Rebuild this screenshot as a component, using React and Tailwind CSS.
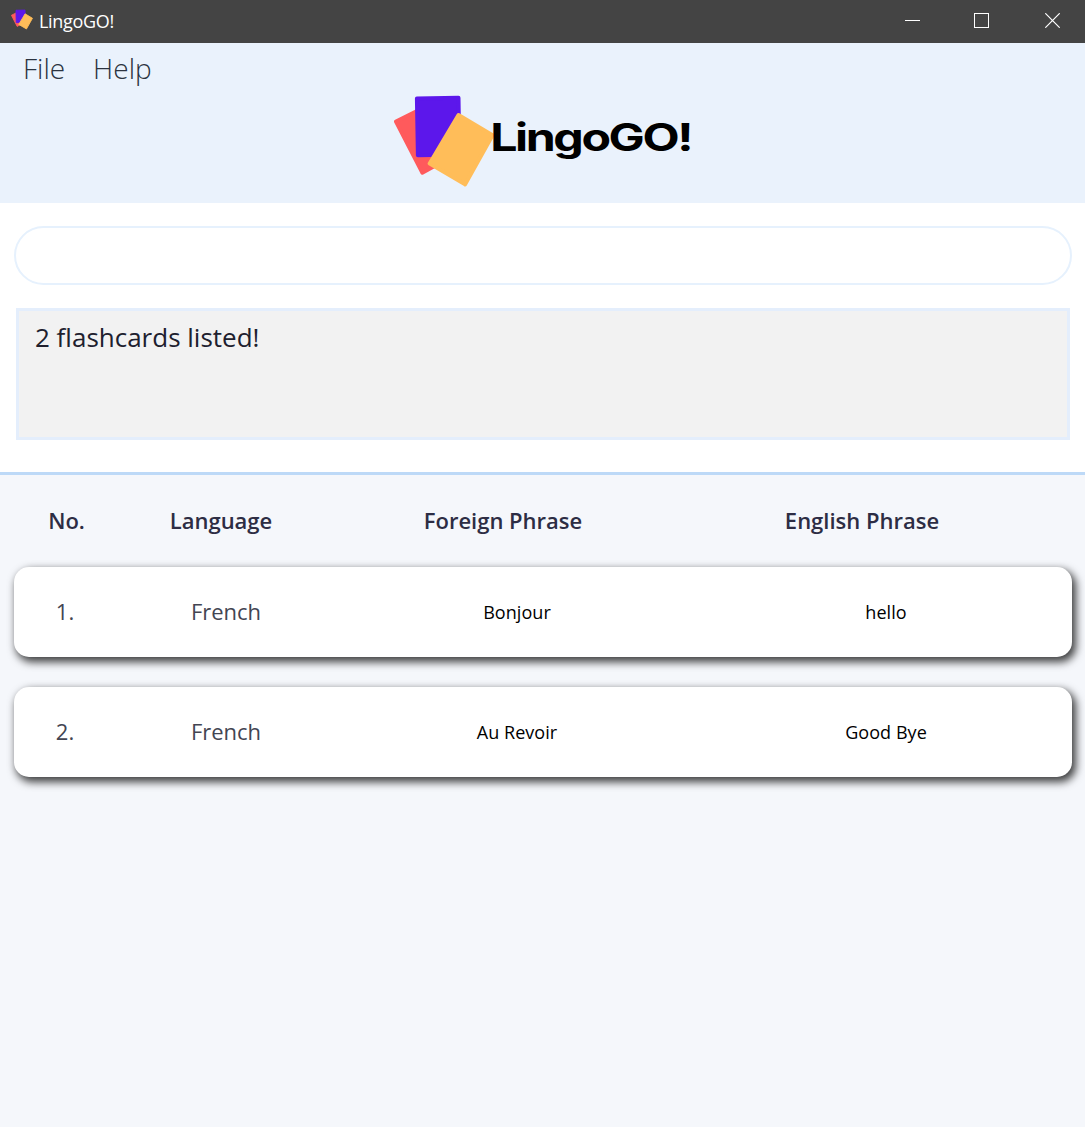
const cards = [
  { no: "1.", language: "French", foreign: "Bonjour", english: "hello" },
  { no: "2.", language: "French", foreign: "Au Revoir", english: "Good Bye" },
];

function CardsMark({ className }) {
  return (
    <svg className={className} viewBox="0 0 101 92" strokeWidth="4" strokeLinejoin="round">
      <path d="M2 26.600 42 6.500 66 57 28.300 77.700Z" fill="#ff5a5c" stroke="#ff5a5c" />
      <path d="M22.900 3.500 64.500 2.800 65.400 59.500 23.900 60.200Z" fill="#5c17eb" stroke="#5c17eb" />
      <path d="M64.500 20 98.500 40.200 71 89.400 35.700 68.600Z" fill="#ffbd59" stroke="#ffbd59" />
    </svg>
  );
}

function TitleBar() {
  return (
    <header className="flex h-[43px] items-center bg-[#444444] pl-[11px] text-white">
      <CardsMark className="mb-1 h-[21px] w-[22px]" />
      <span className="mb-[2px] ml-[6px] text-[18px] leading-none tracking-[-0.3px]">LingoGO!</span>
      <div className="mr-[25px] mb-[3px] ml-auto flex items-center gap-[54px]">
        <svg className="h-[15px] w-[15px]" viewBox="0 0 15 15" stroke="white"><path d="M0 7.500H15" /></svg>
        <svg className="h-[15px] w-[15px]" viewBox="0 0 15 15" fill="none" stroke="white"><rect x=".5" y=".5" width="14" height="14" /></svg>
        <svg className="ml-[2px] h-[15px] w-[15px]" viewBox="0 0 15 15" stroke="white" strokeWidth="1.2"><path d="M.3.3 14.700 14.700M14.700.3.3 14.700" /></svg>
      </div>
    </header>
  );
}

export default function App() {
  return (
    <div className="flex h-[1127px] w-[1085px] flex-col overflow-hidden bg-[#f5f7fb] font-['Open_Sans',sans-serif]">
      <TitleBar />
      <section className="h-[160px] bg-[#eaf2fc]">
        <nav className="flex h-[52px] items-center gap-[28px] pb-[2px] pl-[23px] text-[28px] leading-none font-light text-[#2b3340]">
          <span>File</span>
          <span>Help</span>
        </nav>
        <div className="flex pl-[394px]">
          <CardsMark className="h-[92px] w-[101px]" />
          <svg className="-ml-[5px] h-[92px] w-[210px]" viewBox="0 0 210 92">
            <text transform="translate(0.2 56) scale(1.27 1)" className="font-['Inter',sans-serif] text-[38px] font-bold tracking-[-1.9px]">LingoGO!</text>
          </svg>
        </div>
      </section>
      <section className="h-[269px] bg-white pt-[23px] pr-[13px] pl-[14px]">
        <div className="h-[59px] rounded-full border-2 border-[#e6f1fd]" />
        <div className="mr-[2px] ml-[2px] mt-[23px] h-[132px] border-3 border-[#e4eefc] bg-[#f2f2f2] px-[16px] pt-[8px] text-[26px] leading-[36px] text-[#20202e]">
          2 flashcards listed!
        </div>
      </section>
      <main className="border-t-3 border-[#bdd9f7]">
        <div className="grid h-[92px] grid-cols-[133px_176px_388px_330px] items-center pb-[2px] text-center text-[22px] font-semibold text-[#2d2d44]">
          <span>No.</span>
          <span>Language</span>
          <span>Foreign Phrase</span>
          <span>English Phrase</span>
        </div>
        <div className="flex flex-col gap-[30px] pr-[13px] pl-[14px]">
          {cards.map((card) => (
            <div
              key={card.no}
              className="grid h-[90px] grid-cols-[102px_220px_362px_376px] items-center rounded-[15px] bg-white text-center text-[22px] text-[#434552] shadow-[3px_4px_9px_1px_rgba(0,0,0,0.75)]"
            >
              <span className="pb-[2px]">{card.no}</span>
              <span className="pb-[2px]">{card.language}</span>
              <span className="text-[18px] tracking-[0.05px] text-black">{card.foreign}</span>
              <span className="text-[18px] tracking-[0.05px] text-black">{card.english}</span>
            </div>
          ))}
        </div>
      </main>
    </div>
  );
}
